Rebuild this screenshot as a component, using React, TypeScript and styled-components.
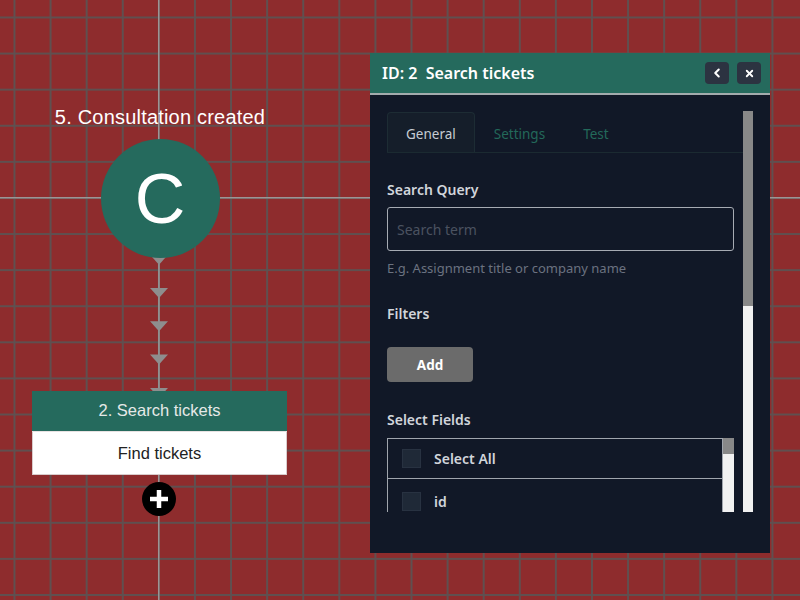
import React from "react";
import styled, { createGlobalStyle } from "styled-components";
import { ChevronLeft, X } from "lucide-react";

const GlobalStyle = createGlobalStyle`
  html, body { margin: 0; padding: 0; overflow: hidden; }
  body { font-family: "Noto Sans", "Open Sans", sans-serif; }
  * { box-sizing: border-box; }
`;

const Canvas = styled.div`
  position: relative;
  width: 800px;
  height: 600px;
  overflow: hidden;
  background-color: #8e2c2d;
  background-image:
    linear-gradient(#9d9595, #9d9595),
    linear-gradient(#9d9595, #9d9595),
    linear-gradient(to right, #5f5050 1.5px, transparent 1.5px),
    linear-gradient(to bottom, #5f5050 1.5px, transparent 1.5px);
  background-size: 1.5px 100%, 100% 1.5px, 36.1px 36.1px, 36.1px 36.1px;
  background-position: 158px 0, 0 196.5px, 13.5px 0, 0 16.5px;
  background-repeat: no-repeat, no-repeat, repeat, repeat;
`;

const TriggerNode = styled.div`
  position: absolute;
  left: 40px;
  top: 105px;
  width: 240px;
  display: flex;
  flex-direction: column;
  align-items: center;
  gap: 10px;
  z-index: 2;
`;

const TriggerLabel = styled.div`
  font-family: "Liberation Sans", Arial, sans-serif;
  font-size: 20px;
  line-height: 24px;
  color: #ffffff;
  letter-spacing: 0.2px;
  white-space: nowrap;
`;

const TriggerCircle = styled.div`
  width: 119px;
  height: 119px;
  border-radius: 50%;
  background: #256a5d;
  display: flex;
  align-items: center;
  justify-content: center;
  color: #ffffff;
  font-family: "Liberation Sans", Arial, sans-serif;
  font-size: 70px;
  line-height: 1;
`;

const Connector = styled.svg`
  position: absolute;
  left: 149px;
  top: 250px;
  z-index: 1;
`;

const StepNode = styled.div`
  position: absolute;
  left: 32px;
  top: 391px;
  width: 255px;
  display: flex;
  flex-direction: column;
  z-index: 2;
  font-family: "Liberation Sans", Arial, sans-serif;
  font-size: 16.5px;
`;

const StepHeader = styled.div`
  height: 41px;
  background: #256a5d;
  color: #e6e9e8;
  display: flex;
  align-items: center;
  justify-content: center;
  padding-bottom: 2px;
  border-bottom: 1px solid #e8e2e2;
`;

const StepBody = styled.div`
  height: 43px;
  background: #ffffff;
  color: #222222;
  display: flex;
  align-items: center;
  justify-content: center;
  border: 1px solid #d9cccc;
  border-top: none;
`;

const AddNodeButton = styled.div`
  position: absolute;
  left: 142px;
  top: 482px;
  width: 34px;
  height: 34px;
  border-radius: 50%;
  background: #000000;
  display: flex;
  align-items: center;
  justify-content: center;
  z-index: 2;
`;

const Panel = styled.div`
  position: absolute;
  left: 370px;
  top: 53px;
  width: 400px;
  height: 500px;
  background: #111827;
  display: flex;
  flex-direction: column;
  z-index: 3;
`;

const PanelHeader = styled.div`
  height: 42px;
  flex: none;
  background: #256a5d;
  border-bottom: 2px solid #a3abad;
  display: flex;
  align-items: center;
  padding: 0 9px 0 12px;
`;

const PanelTitle = styled.div`
  flex: 1;
  color: #ffffff;
  font-weight: 600;
  font-size: 16px;
  white-space: pre;
`;

const HeaderButtons = styled.div`
  display: flex;
  gap: 8px;
`;

const IconButton = styled.button`
  width: 24px;
  height: 22px;
  border: none;
  border-radius: 4px;
  background: #2c3341;
  color: #ffffff;
  padding: 0;
  display: flex;
  align-items: center;
  justify-content: center;
`;

const PanelBody = styled.div`
  flex: 1;
  display: flex;
  padding: 16px 17px 0 17px;
`;

const ScrollContent = styled.div`
  width: 356px;
  height: 401px;
  overflow: hidden;
`;

const ScrollTrack = styled.div<{ $w: number }>`
  width: ${(p) => p.$w}px;
  flex: none;
  background: #f1f1f1;
  display: flex;
  flex-direction: column;
`;

const ScrollThumb = styled.div<{ $h: number }>`
  height: ${(p) => p.$h}px;
  background: #888888;
`;

const TabBar = styled.div`
  display: flex;
  padding-top: 1px;
  border-bottom: 1px solid #1b2a31;
`;

const Tab = styled.div<{ $active?: boolean }>`
  height: 40px;
  padding: 2px 18px 0;
  display: flex;
  align-items: center;
  font-size: 13.5px;
  color: ${(p) => (p.$active ? "#c6ccd3" : "#23695a")};
  background: ${(p) => (p.$active ? "#151e2a" : "transparent")};
  border: 1px solid ${(p) => (p.$active ? "#1d2c34" : "transparent")};
  border-bottom: none;
  border-radius: 4px 4px 0 0;
`;

const Form = styled.div`
  padding: 27px 9px 0 0;
  display: flex;
  flex-direction: column;
`;

const Label = styled.div<{ $mb?: number; $mt?: number }>`
  font-size: 14px;
  line-height: 20px;
  font-weight: 600;
  color: #d1d5db;
  margin-top: ${(p) => p.$mt ?? 0}px;
  margin-bottom: ${(p) => p.$mb ?? 7}px;
`;

const TextInput = styled.input`
  height: 44px;
  width: 100%;
  background: transparent;
  border: 1px solid #a6abb3;
  border-radius: 3px;
  padding: 0 9px;
  font-family: "Noto Sans", "Open Sans", sans-serif;
  font-size: 14px;
  color: #d1d5db;
  outline: none;
  &::placeholder { color: #4b5260; }
`;

const HelpText = styled.div`
  margin-top: 8px;
  font-size: 13px;
  line-height: 18px;
  color: #6b7280;
`;

const AddButton = styled.button`
  width: 86px;
  height: 35px;
  border: none;
  border-radius: 4px;
  background: #6b6b6b;
  color: #ffffff;
  font-family: "Noto Sans", "Open Sans", sans-serif;
  font-weight: 700;
  font-size: 13.5px;
  padding: 0;
`;

const FieldList = styled.div`
  display: flex;
  height: 100px;
`;

const FieldRows = styled.div`
  flex: 1;
  border: 1px solid #a0a5ad;
  border-bottom: none;
  display: flex;
  flex-direction: column;
`;

const FieldRow = styled.div<{ $h: number }>`
  height: ${(p) => p.$h}px;
  flex: none;
  display: flex;
  align-items: center;
  padding-left: 14px;
  gap: 13px;
  border-bottom: 1px solid #a0a5ad;
  font-size: 14px;
  font-weight: 600;
  color: #d1d5db;
`;

const CheckBox = styled.div`
  width: 19px;
  height: 19px;
  background: #1f2937;
  border: 1px solid #283241;
`;

export default function App() {
  const arrows = [4.7, 38, 71.3, 104.6, 137.9];
  return (
    <>
      <GlobalStyle />
      <Canvas>
        <Connector width={20} height={142} viewBox="0 0 20 142">
          <line x1={10} y1={0} x2={10} y2={141} stroke="#8e8e8e" strokeWidth={1.5} />
          {arrows.map((y) => (
            <polygon key={y} points={`1,${y} 19,${y} 10,${y + 10}`} fill="#8e8e8e" />
          ))}
        </Connector>
        <TriggerNode>
          <TriggerLabel>5. Consultation created</TriggerLabel>
          <TriggerCircle>C</TriggerCircle>
        </TriggerNode>
        <StepNode>
          <StepHeader>2. Search tickets</StepHeader>
          <StepBody>Find tickets</StepBody>
        </StepNode>
        <AddNodeButton>
          <svg width="20" height="20" viewBox="0 0 20 20">
            <rect x="7.75" y="1" width="4.5" height="18" fill="#fff" />
            <rect x="1" y="7.75" width="18" height="4.5" fill="#fff" />
          </svg>
        </AddNodeButton>
        <Panel>
          <PanelHeader>
            <PanelTitle>{"ID: 2  Search tickets"}</PanelTitle>
            <HeaderButtons>
              <IconButton>
                <ChevronLeft size={14} strokeWidth={3.5} />
              </IconButton>
              <IconButton>
                <X size={11} strokeWidth={4} />
              </IconButton>
            </HeaderButtons>
          </PanelHeader>
          <PanelBody>
            <ScrollContent>
              <TabBar>
                <Tab $active>General</Tab>
                <Tab>Settings</Tab>
                <Tab>Test</Tab>
              </TabBar>
              <Form>
                <Label>Search Query</Label>
                <TextInput placeholder="Search term" />
                <HelpText>E.g. Assignment title or company name</HelpText>
                <Label $mt={27} $mb={23}>Filters</Label>
                <div>
                  <AddButton>Add</AddButton>
                </div>
                <Label $mt={28} $mb={8}>Select Fields</Label>
                <FieldList>
                  <FieldRows>
                    <FieldRow $h={40}>
                      <CheckBox />
                      Select All
                    </FieldRow>
                    <FieldRow $h={45}>
                      <CheckBox />
                      id
                    </FieldRow>
                  </FieldRows>
                  <ScrollTrack $w={11}>
                    <ScrollThumb $h={16} />
                  </ScrollTrack>
                </FieldList>
              </Form>
            </ScrollContent>
            <ScrollTrack $w={10} style={{ height: 401 }}>
              <ScrollThumb $h={195} />
            </ScrollTrack>
          </PanelBody>
        </Panel>
      </Canvas>
    </>
  );
}
